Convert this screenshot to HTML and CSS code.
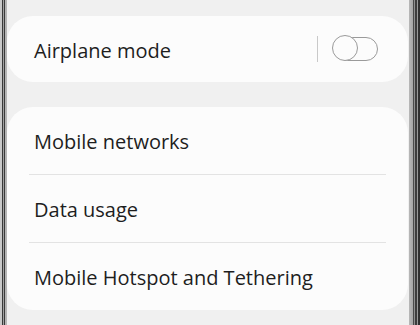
FILE: index.html
```html
<!DOCTYPE html>
<html lang="en">
<head>
    <meta charset="UTF-8">
    <meta name="viewport" content="width=device-width, initial-scale=1.0">
    <title>Connections</title>
    <link rel="stylesheet" href="styles.css">
</head>
<body>
    <div class="phone">
        <div class="frame-left"></div>
        <div class="screen">
            <!-- Airplane mode card -->
            <div class="card">
                <div class="row">
                    <span class="label">Airplane mode</span>
                    <div class="switch-area">
                        <span class="split"></span>
                        <span class="switch"><span class="thumb"></span></span>
                    </div>
                </div>
            </div>
            <!-- Network settings -->
            <div class="card">
                <div class="row">
                    <span class="label">Mobile networks</span>
                </div>
                <div class="row">
                    <span class="label">Data usage</span>
                </div>
                <div class="row">
                    <span class="label">Mobile Hotspot and Tethering</span>
                </div>
            </div>
        </div>
        <div class="frame-right"></div>
    </div>
</body>
</html>
```

FILE: styles.css
```css
body {
    margin: 0;
    font-family: "Open Sans", "Noto Sans", sans-serif;
    background: #f0f0f0;
}
.phone {
    display: flex;
    height: 325px;
    overflow: hidden;
}
.frame-left {
    width: 7px;
    background: linear-gradient(to right, #c9c9c9 0, #c9c9c9 2px, #3a3a3a 2px, #3a3a3a 3px, #a0a0a0 3px, #a0a0a0 4px, #3a3a3a 4px, #3a3a3a 5px, #b5b5b5 5px);
}
.frame-right {
    width: 11px;
    background: linear-gradient(to right, #b8b8b8 0, #a4a4a4 4px, #4a4a4a 4px, #4a4a4a 5px, #8f8f8f 5px, #8f8f8f 6px, #3c3c3c 6px, #3c3c3c 8px, #999 8px, #999 9px, #2e2e2e 9px);
}
.screen {
    flex: 1;
    padding-top: 16px;
    display: flex;
    flex-direction: column;
    gap: 25px;
}
.card {
    background: #fcfcfc;
    border-radius: 26px;
    margin-right: 1px;
    padding: 0 22px;
}
.row {
    display: flex;
    align-items: center;
    height: 67px;
    padding: 0 5px;
    border-top: 1px solid #e3e3e3;
}
.row:first-child {
    border-top: none;
}
.card:first-child .row {
    height: 66px;
}
.label {
    font-size: 20px;
    color: #1e1e1e;
    position: relative;
    top: 1px;
}
.switch-area {
    margin-left: auto;
    display: flex;
    align-items: center;
    gap: 18px;
}
.split {
    width: 1px;
    height: 26px;
    background: #c9c9c9;
}
.switch {
    position: relative;
    width: 40px;
    height: 22px;
    border: 1.5px solid #9a9a9a;
    border-radius: 12px;
    margin-right: 3px;
}
.thumb {
    position: absolute;
    left: -5px;
    top: -3.5px;
    width: 24px;
    height: 24px;
    border: 1.5px solid #9a9a9a;
    border-radius: 50%;
    background: #fcfcfc;
}
```
